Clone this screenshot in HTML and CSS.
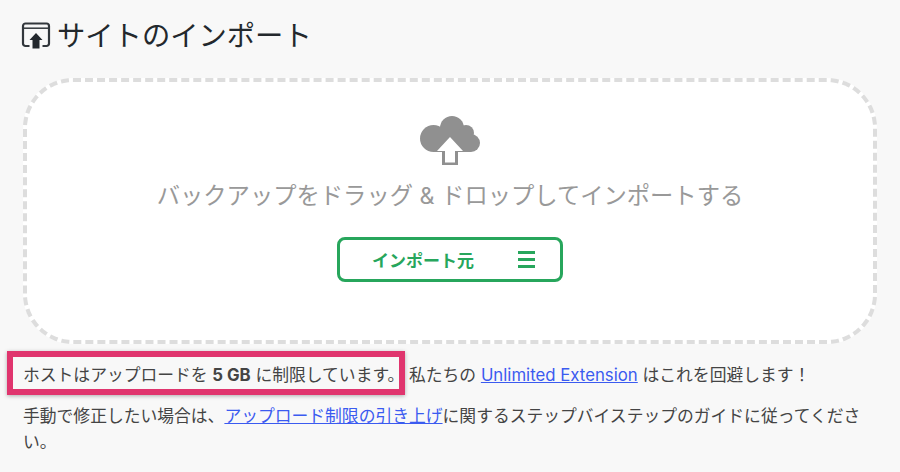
FILE: index.html
```html
<!DOCTYPE html>
<html lang="ja">
<head>
<meta charset="utf-8">
<title>サイトのインポート</title>
<link rel="stylesheet" href="styles.css">
</head>
<body>
<main class="page">
  <h1 class="title">
    <svg class="title-icon" viewBox="0 0 30 29" width="30" height="29" aria-hidden="true">
      <path d="M8.500 26H4.500A2.500 2.500 0 0 1 2 23.500V6A2.500 2.500 0 0 1 4.500 3.500H25.500A2.500 2.500 0 0 1 28 6V23.500A2.500 2.500 0 0 1 25.500 26H21.500" fill="none" stroke="#32373c" stroke-width="2.200"/>
      <path d="M2 8.200H28" stroke="#32373c" stroke-width="1.500"/>
      <path d="M15 13L21.500 20H18.500V28.500H11.500V20H8.500Z" fill="#23282d"/>
    </svg>
    <span>サイトのインポート</span>
  </h1>
  <section class="drop">
    <svg class="cloud" viewBox="0 0 60 50" width="60" height="50" aria-hidden="true">
      <g fill="#909090">
        <circle cx="13.500" cy="22.500" r="13.500"/>
        <circle cx="32" cy="12" r="12"/>
        <circle cx="46" cy="17" r="8"/>
        <circle cx="51" cy="27" r="9"/>
        <rect x="13" y="14" width="38" height="22"/>
        <rect x="22" y="34" width="16" height="15"/>
      </g>
      <path d="M30 21L43 35H35V46.500H25V35H17Z" fill="#fff"/>
    </svg>
    <p class="drop-text">バックアップをドラッグ &amp; ドロップしてインポートする</p>
    <button class="import-btn" type="button">
      <span class="btn-label">インポート元</span>
      <span class="btn-lines"><i></i><i></i><i></i></span>
    </button>
  </section>
  <p class="note first">ホストはアップロードを <strong>5 GB</strong> に制限しています。 私たちの <a href="#">Unlimited Extension</a> はこれを回避します！</p>
  <p class="note second">手動で修正したい場合は、<a href="#">アップロード制限の引き上げ</a>に関するステップバイステップのガイドに従ってください。</p>
  <div class="highlight"></div>
</main>
</body>
</html>
```
FILE: styles.css
```css
* { box-sizing: border-box; }
html, body { margin: 0; height: 100%; }
body {
  background: #f8f8f8;
  color: #444;
  font-family: Inter, "Noto Sans CJK JP", sans-serif;
  overflow: hidden;
}
.page {
  position: relative;
  width: 900px;
  height: 472px;
  padding: 18px 23px 0;
}
.title {
  display: flex;
  align-items: center;
  gap: 6px;
  margin: 0 0 24px;
  height: 36px;
  font-size: 28.300px;
  font-weight: 400;
  line-height: 36px;
  color: #23282d;
}
.title-icon { flex: none; margin-left: -2px; margin-top: -3px; }
.drop {
  display: flex;
  flex-direction: column;
  align-items: center;
  width: 854px;
  height: 266px;
  padding-top: 34px;
  background: #fff;
  border: 4px dashed #ddd;
  border-radius: 50px;
}
.cloud { display: block; }
.drop-text {
  margin: 14px 0 0;
  font-size: 23.3px;
  line-height: 32px;
  color: #999;
  white-space: nowrap;
}
.import-btn {
  display: flex;
  align-items: center;
  justify-content: space-between;
  width: 226px;
  height: 45px;
  margin-top: 25px;
  padding: 0 25px 0 32px;
  background: #fff;
  border: 3px solid #27a65c;
  border-radius: 8px;
  color: #27a65c;
  font: bold 17px Inter, "Noto Sans CJK JP", sans-serif;
}
.btn-lines { display: flex; flex-direction: column; gap: 4.500px; width: 17px; }
.btn-lines i { display: block; height: 2.500px; background: #27a65c; }
.note {
  margin: 0;
  font-size: 16.800px;
  line-height: 26px;
}
.note a { color: #3b5bf0; }
.note.first { margin-top: 18px; }
.note.second { margin-top: 15px; }
.highlight {
  position: absolute;
  left: 7px;
  top: 351px;
  width: 398px;
  height: 44px;
  border: 6.500px solid #e0356e;
  box-shadow: 0 1px 4px rgba(0,0,0,.3);
}
```
